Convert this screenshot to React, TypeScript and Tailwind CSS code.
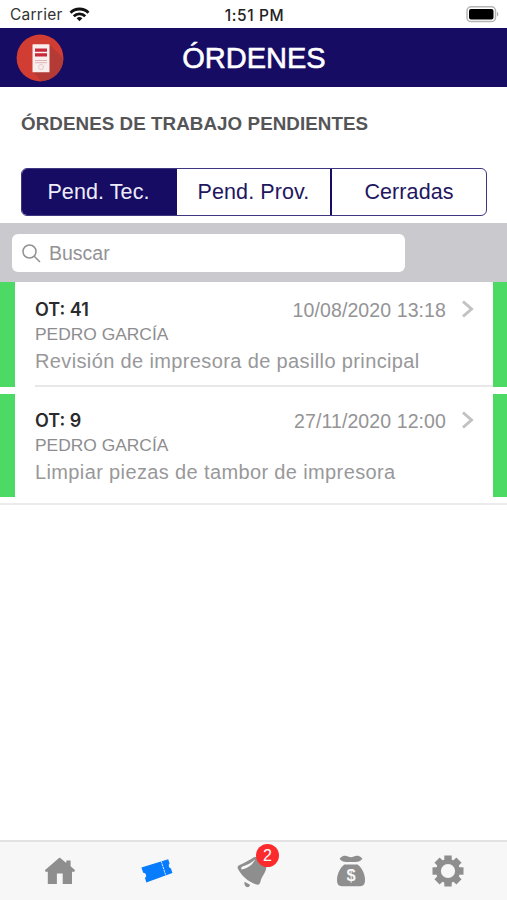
interface Order {
  id: number
  date: string
  owner: string
  description: string
}

const orders: Order[] = [
  { id: 41, date: '10/08/2020 13:18', owner: 'PEDRO GARCÍA', description: 'Revisión de impresora de pasillo principal' },
  { id: 9, date: '27/11/2020 12:00', owner: 'PEDRO GARCÍA', description: 'Limpiar piezas de tambor de impresora' },
]

const StatusBar = () => (
  <div className="flex h-7 shrink-0 items-center justify-between bg-white pl-[10px] pr-2 pt-[2px] font-['Inter',sans-serif] text-[15.5px] text-[#222]">
    <div className="flex flex-1 items-center gap-[6px]">
      <span className="tracking-[0.25px] text-[#333]">Carrier</span>
      <svg className="-mt-px" width="21" height="15" viewBox="0 0 21 15" fill="none" stroke="#111" strokeWidth="2.8">
        <path d="M1.5 5.7a12.8 12.8 0 0 1 18 0" />
        <path d="M4.8 9.2a8 8 0 0 1 11.4 0" />
        <path d="M10.5 14.2l-2.9-2.9a4.2 4.2 0 0 1 5.8 0z" fill="#111" stroke="none" />
      </svg>
    </div>
    <span className="pt-px font-medium tracking-[0.6px]">1:51 PM</span>
    <div className="flex flex-1 justify-end">
      <svg className="-mt-px" width="33" height="17" viewBox="0 0 33 17">
        <rect x="1" y="0.8" width="28.5" height="14.8" rx="4.2" fill="#fff" stroke="#b5b5b5" strokeWidth="1.5" />
        <rect x="3" y="3" width="24.5" height="10.4" rx="2" fill="#000" />
        <path d="M31 5.8c1.8.8 1.8 4 0 4.8z" fill="#aaa" />
      </svg>
    </div>
  </div>
)

const Logo = () => (
  <svg width="48" height="48" viewBox="0 0 48 48">
    <defs>
      <clipPath id="disc">
        <circle cx="24" cy="24" r="23.4" />
      </clipPath>
    </defs>
    <circle cx="24" cy="24" r="23.4" fill="#d13d32" />
    <path d="M33 10l16 16v24H28L17 38z" fill="#b33a35" clipPath="url(#disc)" />
    <rect x="16.5" y="10.3" width="17" height="28" rx="0.6" fill="#f8eeee" />
    <path d="M19 14.5h12v3.3H19zM19 19.3h12v3.3H19z" fill="#c8283a" />
    <path d="M19 26.5h12M19 28.7h12" stroke="#dfb4b4" strokeWidth="1" />
    <circle cx="25" cy="33" r="2.5" fill="none" stroke="#e3c9c9" />
  </svg>
)

const HomeIcon = () => (
  <svg width="32" height="28" viewBox="0 0 32 28" fill="#8e8e8e">
    <path d="M16 .8L22.3 6V3.6h4.3V9.3l4 3.4c.8.8.3 2-.8 2h-1.8v12.3h-9.3v-10.5h-5.8v10.5H3.8V14.7H2.2c-1.2 0-1.7-1.2-.8-2L14.7 1.3c.5-.4.8-.5 1.3-.5z" />
  </svg>
)

const TicketIcon = () => (
  <svg width="34" height="26" viewBox="0 0 34 26">
    <path
      d="M1.4 9.6L28.2 1.2l1.4 4.4a3 3 0 0 0 1.4 5l1.4 4.4L6.3 24.6 5 20.1a3 3 0 0 0-1.8-5.4z"
      fill="#087cff"
    />
    <path d="M21.3 3.4L25.8 17.6" stroke="#d9ebff" strokeWidth="1" strokeDasharray="2.2 .7" />
  </svg>
)

const BellIcon = () => (
  <svg className="translate-y-px" width="34" height="36" viewBox="0 0 34 36">
    <path
      d="M17 3.2c4-1.6 12 4 12.4 9.6-.3 5-3.4 8.5-5.1 12-.8 2-.7 3.7-1.9 5.2-.9 1-2.3.9-3.8.3C10.6 27.4 4.6 22 .9 14.8c-.6-1.6-.3-2.9 1.2-3.6C7.6 8.9 11.8 6.3 17 3.2z"
      fill="#8e8e8e"
    />
    <path d="M4.4 15.4c6.4-1 11.3-4.6 13.9-10.2-3.8 4-8.2 5.4-12.8 7.4-1.3.7-1.6 1.7-1.1 2.8z" fill="#f7f7f7" />
    <path d="M7.6 27.8l5.4 2.9c-.3 2-1.7 2.8-3.3 2.3-1.8-.6-2.7-2.7-2.1-5.2z" fill="#8e8e8e" />
  </svg>
)

const MoneyIcon = () => (
  <svg width="30" height="34" viewBox="0 0 30 34" fill="#8e8e8e">
    <path d="M4.2 4C6.8 1.4 10 1.4 12 2.6c2 1 3.8 1 5.8 0 2.3-1.2 5.4-1.2 8 1.4.7.6.6 1 0 1.5-2.2 1.8-3.6 2.5-6 2.5H10.2c-2.4 0-4-.7-6-2.5-.6-.5-.6-.9 0-1.5z" />
    <path d="M8.4 10.6h13.2c4 3 7.4 9 7.4 15.4 0 4.2-1.6 6.2-4.8 6.2H5.8C2.6 32.2 1 30.2 1 26c0-6.4 3.4-12.4 7.4-15.4z" />
    <text x="15" y="27" textAnchor="middle" fontFamily="Liberation Sans, sans-serif" fontSize="16.5" fontWeight="bold" fill="#f7f7f7">
      $
    </text>
  </svg>
)

const GearIcon = () => (
  <svg width="32" height="32" viewBox="0 0 32 32" fill="#8e8e8e">
    {[0, 45, 90, 135].map((angle) => (
      <rect key={angle} x="12.3" y="0.5" width="7.4" height="31" transform={`rotate(${angle} 16 16)`} />
    ))}
    <circle cx="16" cy="16" r="12" />
    <circle cx="16" cy="16" r="7.1" fill="#f7f7f7" />
  </svg>
)

const OrderRow = ({ order, last }: { order: Order; last: boolean }) => (
  <li className={last ? 'flex h-[103px]' : 'mb-[7px] flex h-[105px]'}>
    <div className="w-[15px] bg-[#4cd964]" />
    <div className={`ml-5 flex-1 ${last ? 'pt-[14px]' : 'border-b-2 border-[#e8e8e9] pt-[15px]'}`}>
      <div className="flex h-6 items-center">
        <span className="flex-1 font-['Inter',sans-serif] text-[18px] font-semibold text-[#2b2b2b]">OT: {order.id}</span>
        <span className="pt-1 text-[19.5px] tracking-[0.1px] text-[#949496]">{order.date}</span>
        <svg className="ml-[15px] mr-[18px]" width="14" height="18" viewBox="0 0 14 18" fill="none" stroke="#c2c2c5" strokeWidth="3">
          <path d="M2 1.5L10.5 9 2 16.5" />
        </svg>
      </div>
      <div className="mt-px h-6 text-[17.4px] leading-6 text-[#8d8d8f]">{order.owner}</div>
      <div className="mt-[3px] h-6 whitespace-nowrap text-[20px] leading-6 tracking-[0.37px] text-[#98989a]">{order.description}</div>
    </div>
    <div className="w-[14px] bg-[#4cd964]" />
  </li>
)

export default function App() {
  return (
    <div className="flex h-[900px] w-[507px] flex-col overflow-hidden bg-white font-['Liberation_Sans',Arial,sans-serif]">
      <StatusBar />

      {/* Header */}
      <header className="flex h-[59px] shrink-0 items-center bg-[#160c63] px-4">
        <Logo />
        <h1 className="mr-[47px] flex-1 pt-[2px] text-center text-[29px] text-white [-webkit-text-stroke:0.6px_white]">ÓRDENES</h1>
      </header>

      <h2 className="mt-6 pl-[21px] text-[18.8px] leading-[26px] font-bold tracking-[0.06px] text-[#555557]">ÓRDENES DE TRABAJO PENDIENTES</h2>

      {/* Segmented control */}
      <div className="ml-[21px] mr-5 mt-[31px] flex h-12 shrink-0 overflow-hidden rounded-[6px] border border-[#3e3780] text-[21.5px] tracking-[0.1px] text-[#22165f]">
        <button className="w-[155px] bg-[#160c63] pr-[2px] text-[#eeecfb]">Pend. Tec.</button>
        <button className="w-[155px] border-r-2 border-[#160c63]">Pend. Prov.</button>
        <button className="flex-1">Cerradas</button>
      </div>

      {/* Search */}
      <div className="mt-[7px] h-[59px] shrink-0 bg-[#c9c9ce] pl-3 pt-[11px]">
        <div className="flex h-[38px] w-[393px] items-center rounded-[6px] bg-white pl-[10px] text-[19.5px] text-[#929294]">
          <svg width="19" height="19" viewBox="0 0 19 19" fill="none" stroke="#929294" strokeWidth="1.5">
            <circle cx="7.5" cy="7.5" r="6.5" />
            <path d="M12 12l6 6" />
          </svg>
          <span className="ml-2 pt-[2px]">Buscar</span>
        </div>
      </div>

      {/* Orders */}
      <ul className="border-b-2 border-[#ececed] pb-[6px]">
        {orders.map((order, i) => (
          <OrderRow key={order.id} order={order} last={i === orders.length - 1} />
        ))}
      </ul>

      {/* Tab bar */}
      <nav className="mt-auto flex h-[60px] shrink-0 items-center border-t-2 border-[#e2e2e3] bg-[#f7f7f7] px-[11px]">
        <a className="flex w-[97px] justify-center"><HomeIcon /></a>
        <a className="flex w-[97px] justify-center"><TicketIcon /></a>
        <a className="relative flex w-[97px] justify-center">
          <BellIcon />
          <span className="absolute -top-[9px] left-[51px] flex size-[23px] items-center justify-center rounded-full bg-[#fb2a2d] text-[16px] text-white">2</span>
        </a>
        <a className="flex w-[97px] justify-center"><MoneyIcon /></a>
        <a className="flex w-[97px] justify-center"><GearIcon /></a>
      </nav>
    </div>
  )
}
